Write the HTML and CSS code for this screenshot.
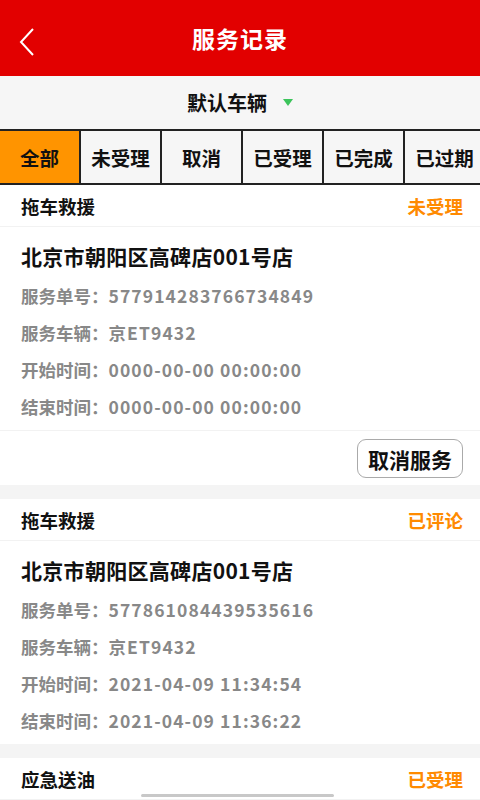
FILE: index.html
```html
<!DOCTYPE html>
<html lang="zh-CN">
<head>
    <meta charset="UTF-8">
    <meta name="viewport" content="width=device-width, initial-scale=1.0">
    <title>服务记录</title>
    <link rel="stylesheet" href="styles.css">
</head>
<body>
    <div class="header">
        <div class="back">
            <svg width="16" height="28" viewBox="0 0 16 28">
                <path d="M14 1 L2 14 L14 27" fill="none" stroke="#fff" stroke-width="2"/>
            </svg>
        </div>
        <div class="title">服务记录</div>
    </div>

    <div class="vehicle-bar">
        <span>默认车辆</span>
        <span class="arrow"></span>
    </div>

    <div class="tabs">
        <div class="tab active">全部</div>
        <div class="tab">未受理</div>
        <div class="tab">取消</div>
        <div class="tab">已受理</div>
        <div class="tab">已完成</div>
        <div class="tab">已过期</div>
    </div>

    <div class="list">
        <div class="card">
            <div class="card-head">
                <span class="type">拖车救援</span>
                <span class="status">未受理</span>
            </div>
            <div class="card-body">
                <div class="address">北京市朝阳区高碑店001号店</div>
                <div class="row"><span class="label">服务单号：</span><span class="value">577914283766734849</span></div>
                <div class="row"><span class="label">服务车辆：</span><span class="value">京ET9432</span></div>
                <div class="row"><span class="label">开始时间：</span><span class="value">0000-00-00 00:00:00</span></div>
                <div class="row"><span class="label">结束时间：</span><span class="value">0000-00-00 00:00:00</span></div>
            </div>
            <div class="card-foot">
                <div class="btn">取消服务</div>
            </div>
        </div>

        <div class="card">
            <div class="card-head">
                <span class="type">拖车救援</span>
                <span class="status">已评论</span>
            </div>
            <div class="card-body">
                <div class="address">北京市朝阳区高碑店001号店</div>
                <div class="row"><span class="label">服务单号：</span><span class="value">577861084439535616</span></div>
                <div class="row"><span class="label">服务车辆：</span><span class="value">京ET9432</span></div>
                <div class="row"><span class="label">开始时间：</span><span class="value">2021-04-09 11:34:54</span></div>
                <div class="row"><span class="label">结束时间：</span><span class="value">2021-04-09 11:36:22</span></div>
            </div>
        </div>

        <div class="card">
            <div class="card-head">
                <span class="type">应急送油</span>
                <span class="status">已受理</span>
            </div>
        </div>
    </div>

    <div class="home-bar"></div>
</body>
</html>
```

FILE: styles.css
```css
* {
    margin: 0;
    padding: 0;
    box-sizing: border-box;
}

body {
    font-family: 'Noto Sans CJK SC', 'Noto Sans', sans-serif;
    background-color: #f4f4f4;
    width: 480px;
    height: 800px;
    overflow: hidden;
    color: #111;
}

.header {
    height: 76px;
    background-color: #e20000;
    display: flex;
    align-items: center;
    justify-content: center;
    position: relative;
}

.back {
    position: absolute;
    left: 19px;
    top: 28px;
    height: 28px;
}

.title {
    color: #fff;
    font-size: 23px;
    font-weight: bold;
    letter-spacing: 1px;
}

.vehicle-bar {
    height: 53px;
    background-color: #f6f6f6;
    display: flex;
    align-items: center;
    justify-content: center;
    gap: 16px;
    font-size: 20px;
    font-weight: bold;
}

.arrow {
    width: 0;
    height: 0;
    border-left: 5px solid transparent;
    border-right: 5px solid transparent;
    border-top: 7px solid #3cc45b;
}

.tabs {
    display: flex;
    height: 56px;
    border-top: 2px solid #222;
    border-bottom: 2px solid #222;
    background-color: #f6f6f6;
    width: 486px;
}

.tab {
    flex: 0 0 81px;
    display: flex;
    align-items: center;
    justify-content: center;
    font-size: 19.5px;
    font-weight: bold;
    border-right: 2px solid #222;
}

.tab.active {
    background-color: #ff9400;
}

.card {
    background-color: #fff;
    margin-bottom: 14px;
}

.card-head {
    height: 42px;
    padding: 0 17px 0 21px;
    display: flex;
    align-items: center;
    justify-content: space-between;
    border-bottom: 1px solid #f2f2f2;
    font-size: 18.5px;
    font-weight: bold;
}

.status {
    color: #ff8a00;
}

.card-body {
    padding: 8px 17px 5px 21px;
}

.address {
    height: 42px;
    display: flex;
    align-items: center;
    font-size: 21px;
    font-weight: bold;
    letter-spacing: 0.3px;
}

.row {
    height: 37px;
    display: flex;
    align-items: center;
    font-size: 17.5px;
    font-weight: bold;
    color: #888;
}

.value {
    letter-spacing: 1.1px;
}

.card-foot {
    border-top: 1px solid #f2f2f2;
    height: 55px;
    padding: 8px 17px 0 0;
    display: flex;
    justify-content: flex-end;
    align-items: flex-start;
}

.btn {
    width: 106px;
    height: 39px;
    border: 1.5px solid #aaa;
    border-radius: 9px;
    display: flex;
    align-items: center;
    justify-content: center;
    font-size: 21px;
    font-weight: bold;
}

.home-bar {
    position: fixed;
    left: 141px;
    bottom: 3px;
    width: 193px;
    height: 3px;
    border-radius: 2px;
    background-color: #c8c8c8;
}
```
